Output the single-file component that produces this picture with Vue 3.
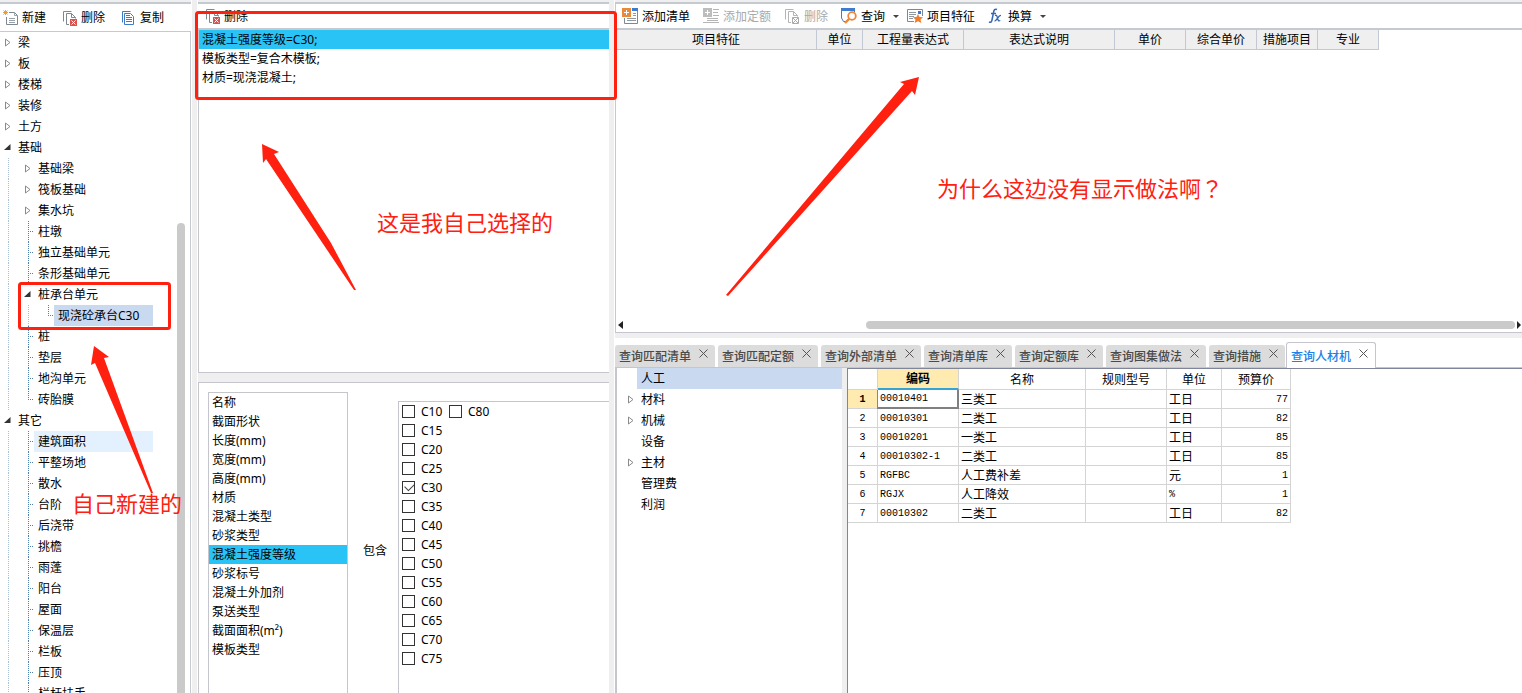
<script setup>
import { ref } from 'vue'

const leaf = (label, depth = 1, extra = {}) => ({ label, depth, mark: 'tee', ...extra })
const closed = (label, depth = 0) => ({ label, depth, mark: 'closed' })
const open = (label, depth = 0) => ({ label, depth, mark: 'open' })

const tree = [
  closed('梁'), closed('板'), closed('楼梯'), closed('装修'), closed('土方'),
  open('基础'),
  closed('基础梁', 1), closed('筏板基础', 1), closed('集水坑', 1),
  leaf('柱墩'), leaf('独立基础单元'), leaf('条形基础单元'),
  open('桩承台单元', 1),
  leaf('现浇砼承台C30', 2, { mark: 'end', state: 'selected' }),
  leaf('桩'), leaf('垫层'), leaf('地沟单元'), leaf('砖胎膜', 1, { mark: 'end' }),
  open('其它'),
  leaf('建筑面积', 1, { state: 'hover' }), leaf('平整场地'), leaf('散水'), leaf('台阶'),
  leaf('后浇带'), leaf('挑檐'), leaf('雨蓬'), leaf('阳台'), leaf('屋面'), leaf('保温层'),
  leaf('栏板'), leaf('压顶'), leaf('栏杆扶手'),
]

const rules = ['混凝土强度等级=C30;', '模板类型=复合木模板;', '材质=现浇混凝土;']

const attributes = [
  '名称', '截面形状', '长度(mm)', '宽度(mm)', '高度(mm)', '材质', '混凝土类型', '砂浆类型',
  '混凝土强度等级', '砂浆标号', '混凝土外加剂', '泵送类型', '截面面积(m²)', '模板类型',
]
const activeAttribute = ref('混凝土强度等级')

const grades = ['C10', 'C15', 'C20', 'C25', 'C30', 'C35', 'C40', 'C45', 'C50', 'C55', 'C60', 'C65', 'C70', 'C75', 'C80']
const checked = ref(['C30'])

const headers = ['项目特征', '单位', '工程量表达式', '表达式说明', '单价', '综合单价', '措施项目', '专业']

const tabs = ['查询匹配清单', '查询匹配定额', '查询外部清单', '查询清单库', '查询定额库', '查询图集做法', '查询措施', '查询人材机']
const activeTab = ref('查询人材机')

const categories = [
  { label: '人工', selected: true }, { label: '材料', more: true }, { label: '机械', more: true },
  { label: '设备' }, { label: '主材', more: true }, { label: '管理费' }, { label: '利润' },
]

const resources = [
  ['00010401', '三类工', '', '工日', 77],
  ['00010301', '二类工', '', '工日', 82],
  ['00010201', '一类工', '', '工日', 85],
  ['00010302-1', '二类工', '', '工日', 85],
  ['RGFBC', '人工费补差', '', '元', 1],
  ['RGJX', '人工降效', '', '%', 1],
  ['00010302', '二类工', '', '工日', 82],
]
</script>

<template>
  <main class="app">
    <svg class="defs" aria-hidden="true">
      <symbol id="i-new" viewBox="0 0 16 16">
        <path d="M6 2.500h5.500l3 3v9h-11V7" fill="#fff" stroke="#7d8892" />
        <path d="M11.500 2.500v3h3M6 8.500h6M6 10.500h6M6 12.500h6" fill="none" stroke="#9aa3ab" />
        <path d="M2.500 0v5M0 2.500h5M.5.5l4 4M4.500.5l-4 4" stroke="#f0a030" />
      </symbol>
      <symbol id="i-delete" viewBox="0 0 16 16">
        <path d="M1.500 11.500v-10h8M7 14.500H4.500v-11h5l4 4v1M9.500 3.500v4h4" fill="none" stroke="#7d8892" />
        <path d="M8 9h7v7H8z" fill="#d9534f" />
        <path d="M9.500 10.500l4 4M13.500 10.500l-4 4" stroke="#fff" />
      </symbol>
      <symbol id="i-delete-off" viewBox="0 0 16 16">
        <path d="M1.500 11.500v-10h8M7 14.500H4.500v-11h5l4 4v1M9.500 3.500v4h4" fill="none" stroke="#b5b5b5" />
        <path d="M8.500 9.500h6v6h-6zM9 10l5 5M14 10l-5 5" fill="none" stroke="#aaa" />
      </symbol>
      <symbol id="i-copy" viewBox="0 0 16 16">
        <path d="M1.500 12.500v-11h8" fill="none" stroke="#3d7cc4" />
        <path d="M3.500 3.500h6l3 3v8h-9z" fill="#fff" stroke="#3d7cc4" />
        <path d="M5 7.500h6M5 9.500h6M5 11.500h6M5 5.500h4" stroke="#3d7cc4" />
      </symbol>
      <symbol id="i-add-list" viewBox="0 0 16 16">
        <path d="M10 1.500h5.500v14h-13V10" fill="#fff" stroke="#7d8892" />
        <path d="M10 0h6v3h-6z" fill="#3d7cd0" />
        <path d="M11 5.500h3M11 7.500h3M5 10.500h9M5 12.500h9" stroke="#8f989f" />
        <path d="M0 0h9v9H0z" fill="#e88a3a" />
        <path d="M4.500 2v5M2 4.500h5" stroke="#fff" />
      </symbol>
      <symbol id="i-add-quota" viewBox="0 0 16 16">
        <path d="M10 1.500h6M10 4.500h5M10 7.500h6M4 10.500h11M0 14.500h16M4 12.500h11" stroke="#b5b5b5" />
        <path d="M0 0h9v9H0z" fill="#bdbdbd" />
        <path d="M4.500 2v5M2 4.500h5" stroke="#fff" />
      </symbol>
      <symbol id="i-query" viewBox="0 0 16 16">
        <path d="M4 13.500H2.500L.5 10V1h13v3" fill="#fff" stroke="#3d7cd0" />
        <path d="M0 0h14v3H0z" fill="#3d7cd0" />
        <circle cx="11" cy="8" r="3.800" fill="#fff" stroke="#ee8435" stroke-width="1.800" />
        <path d="M8 11l-4 4" stroke="#ee8435" stroke-width="2.400" />
      </symbol>
      <symbol id="i-feature" viewBox="0 0 16 16">
        <path d="M7 13.500H.5v-12h15V8" fill="#fff" stroke="#7d8892" />
        <path d="M2 4.500h7M2 6.500h7M2 8.500h5M2 10.500h4" stroke="#8f989f" />
        <path d="M11 3h3v3h-3z" fill="#3d7cd0" />
        <path d="M11 6l1.500 3 3.500.3-2.500 2.300.8 3.400-3.300-1.800L7.700 15l.8-3.400L6 9.300 9.500 9z" fill="#ee7d2e" />
      </symbol>
      <symbol id="i-fx" viewBox="0 0 16 16">
        <path d="M9 1.500C6.800.6 6 2 5.600 4L4 12c-.4 2-1.300 2.700-3 2M3 5.500h5" fill="none" stroke="#3568b0" stroke-width="1.500" />
        <path d="M7 7.500c1.500-.8 2 .2 2.500 2.500s1 3.500 2.800 2.500M13 7.300c-1.500-.2-2.300 1-3.500 3S7.800 13.200 6.500 12.800" fill="none" stroke="#3568b0" stroke-width="1.300" />
      </symbol>
      <symbol id="i-closed" viewBox="0 0 8 9">
        <path d="M1.500 1v7L6 4.500z" fill="#fff" stroke="#8a8a8a" />
      </symbol>
      <symbol id="i-open" viewBox="0 0 8 9">
        <path d="M6.500 1v6H0z" fill="#333" />
      </symbol>
    </svg>

    <aside class="pane side">
      <div class="toolbar">
        <button class="tool"><svg class="icon"><use href="#i-new" /></svg>新建</button>
        <button class="tool"><svg class="icon"><use href="#i-delete" /></svg>删除</button>
        <button class="tool"><svg class="icon"><use href="#i-copy" /></svg>复制</button>
      </div>
      <div class="tree-area">
        <ul class="tree">
          <li v-for="node in tree" :key="node.label" class="node">
            <span v-for="level in node.depth" :key="level" class="guide"></span>
            <span class="toggle" :class="node.mark">
              <svg v-if="node.mark === 'closed' || node.mark === 'open'" class="arrow"><use :href="'#i-' + node.mark" /></svg>
            </span>
            <span class="node-label" :class="node.state">{{ node.label }}</span>
          </li>
        </ul>
        <div class="v-thumb"></div>
      </div>
    </aside>

    <div class="splitter side-splitter"></div>

    <section class="middle">
      <div class="pane rules">
        <div class="toolbar">
          <button class="tool"><svg class="icon"><use href="#i-delete" /></svg>删除</button>
        </div>
        <ul class="list framed">
          <li v-for="(rule, i) in rules" :key="rule" :class="{ picked: i === 0 }">{{ rule }}</li>
        </ul>
      </div>
      <div class="divider"></div>
      <div class="filter">
        <ul class="list attributes">
          <li v-for="name in attributes" :key="name" :class="{ picked: name === activeAttribute }" @click="activeAttribute = name">{{ name }}</li>
        </ul>
        <div class="operator">包含</div>
        <div class="grades">
          <label v-for="grade in grades" :key="grade" class="grade">
            <input v-model="checked" type="checkbox" :value="grade" />{{ grade }}
          </label>
        </div>
      </div>
    </section>

    <div class="splitter main-splitter"></div>

    <section class="right">
      <div class="pane works">
        <div class="toolbar wide">
          <button class="tool"><svg class="icon"><use href="#i-add-list" /></svg>添加清单</button>
          <button class="tool" disabled><svg class="icon"><use href="#i-add-quota" /></svg>添加定额</button>
          <button class="tool" disabled><svg class="icon"><use href="#i-delete-off" /></svg>删除</button>
          <button class="tool drop"><svg class="icon"><use href="#i-query" /></svg>查询</button>
          <button class="tool"><svg class="icon"><use href="#i-feature" /></svg>项目特征</button>
          <button class="tool drop"><svg class="icon"><use href="#i-fx" /></svg>换算</button>
        </div>
        <div class="works-body">
          <table class="works-table">
            <thead>
              <tr><th v-for="(head, i) in headers" :key="head" :class="'w' + i">{{ head }}</th></tr>
            </thead>
          </table>
        </div>
        <div class="h-scroll">
          <button class="scroll-left" aria-label="向左"></button>
          <div class="h-track"><div class="h-thumb"></div></div>
          <button class="scroll-right" aria-label="向右"></button>
        </div>
      </div>
      <div class="divider"></div>
      <div class="query">
        <nav class="tabs">
          <div v-for="tab in tabs" :key="tab" class="tab" :class="{ active: tab === activeTab }">
            <button class="tab-name" @click="activeTab = tab">{{ tab }}</button>
            <button class="tab-close" aria-label="关闭">
              <svg viewBox="0 0 9 9"><path d="M.5.5l8 8M8.500.5l-8 8" stroke="#555" /></svg>
            </button>
          </div>
        </nav>
        <div class="query-body">
          <ul class="categories">
            <li v-for="item in categories" :key="item.label" class="node">
              <span class="cat-toggle"><svg v-if="item.more" class="arrow"><use href="#i-closed" /></svg></span>
              <span class="cat-label" :class="{ selected: item.selected }">{{ item.label }}</span>
            </li>
          </ul>
          <div class="splitter thin"></div>
          <div class="grid-area">
            <table class="grid">
              <thead>
                <tr>
                  <th class="c-num"></th><th class="c-code current">编码</th><th class="c-name">名称</th>
                  <th class="c-spec">规则型号</th><th class="c-unit">单位</th><th class="c-price">预算价</th>
                </tr>
              </thead>
              <tbody>
                <tr v-for="(row, i) in resources" :key="row[0]">
                  <th :class="{ current: i === 0 }">{{ i + 1 }}</th>
                  <td class="latin" :class="{ focus: i === 0 }">{{ row[0] }}</td>
                  <td>{{ row[1] }}</td>
                  <td>{{ row[2] }}</td>
                  <td :class="{ latin: row[3] === '%' }">{{ row[3] }}</td>
                  <td class="latin price">{{ row[4] }}</td>
                </tr>
              </tbody>
            </table>
          </div>
        </div>
      </div>
    </section>

    <svg class="marks" width="1522" height="693" aria-hidden="true">
      <rect x="196.500" y="12.500" width="419" height="86" rx="2" />
      <rect x="19.500" y="283.500" width="150" height="45" rx="2" />
      <polygon points="94,346 109,357 104,358 153,493 151,493 95,363 91,365" />
      <polygon points="262,144 279,152 274,154 331,243 356,290 354,290 266,159 263,163" />
      <polygon points="919,77 915,95 912,91 728,296 726,295 904,84 900,82" />
    </svg>
    <p class="note note-new">自己新建的</p>
    <p class="note note-chosen">这是我自己选择的</p>
    <p class="note note-why">为什么这边没有显示做法啊？</p>
  </main>
</template>

<style>
html, body { overflow: hidden; }
</style>

<style scoped>
.app {
  position: relative;
  display: grid;
  grid-template-columns: 191px 7px 411px 6px minmax(0, 1fr);
  height: 100vh;
  overflow: hidden;
  background: #fff;
  color: #000;
  font: 12px/19px "Noto Sans", "Noto Sans CJK SC", sans-serif;
}
.app * { box-sizing: border-box; }
.defs { position: absolute; width: 0; height: 0; }
ul { list-style: none; margin: 0; padding: 0; }
p { margin: 0; }
button {
  margin: 0;
  padding: 0;
  border: 0;
  background: none;
  color: inherit;
  font: inherit;
}

.pane {
  display: flex;
  flex-direction: column;
  min-height: 0;
  border-top: 2px solid #efefef;
}
.toolbar {
  display: flex;
  flex: none;
  align-items: center;
  height: 28px;
  padding-left: 3px;
  border-top: 2px solid #c5c9d0;
  border-bottom: 2px solid #c5c9d0;
  white-space: nowrap;
}
.side .toolbar { height: 30px; border-bottom-width: 1px; gap: 16px; }
.rules .toolbar { padding-left: 7px; }
.toolbar.wide { border-left: 1px solid #c5c9d0; padding-left: 0; }
.tool { display: flex; align-items: center; gap: 3px; height: 22px; }
.icon { width: 16px; height: 16px; flex: none; }
.wide .tool { gap: 4px; padding: 0 7px 0 6px; }
.tool:disabled { color: #a9a9a9; }
.wide .drop { padding-right: 2px; }
.drop::after {
  content: "";
  margin-left: 4px;
  border: 3px solid transparent;
  border-top-color: #444;
  border-bottom: 0;
}

.tree-area {
  display: flex;
  flex: 1;
  min-height: 0;
  overflow: hidden;
  border-right: 1px solid #c5c9d0;
}
.tree { flex: 1; }
.node { display: flex; height: 21px; line-height: 21px; white-space: nowrap; }
.guide, .toggle { flex: none; background-repeat: no-repeat; }
.guide {
  width: 20px;
  background-image: repeating-linear-gradient(#a9c0d6 0 1px, transparent 1px 2px);
  background-size: 1px 100%;
  background-position: 8px 0;
}
.toggle { display: flex; align-items: center; width: 14px; padding-left: 4px; }
.toggle.tee, .toggle.end {
  background-image:
    repeating-linear-gradient(#4f7fae 0 1px, transparent 1px 2px),
    repeating-linear-gradient(90deg, #4f7fae 0 1px, transparent 1px 2px);
  background-size: 1px 100%, 5px 1px;
  background-position: 8px 0, 8px 10px;
}
.toggle.end { background-size: 1px 11px, 5px 1px; }
.arrow { width: 8px; height: 9px; flex: none; }
.node-label { flex: 1; padding-left: 4px; margin-right: 24px; }
.node-label.selected, .cat-label.selected { background: #c9d9ef; }
.node-label.hover { background: #e3f0fe; }
.v-thumb {
  width: 8px;
  margin: 191px 5px 0 0;
  border-radius: 4px 4px 0 0;
  background: #cacaca;
}

.splitter { background: #efefef; }
.side-splitter { border: solid #fff; border-width: 0 1px; }
.main-splitter { border-right: 1px solid #fff; }

.middle {
  display: grid;
  grid-template-rows: minmax(0, 373fr) 9px minmax(0, 311fr);
  min-height: 0;
}
.divider { background: #efefef; }
.list li { height: 19px; white-space: nowrap; cursor: default; }
.picked { background: #2ac3f5; }
.framed {
  flex: 1;
  border: solid #c5c5cd;
  border-width: 0 0 1px 1px;
}
.framed li { padding-left: 3px; }
.filter {
  display: flex;
  min-height: 0;
  padding: 9px 0 0 9px;
  border: solid #c5c5cd;
  border-width: 1px 0 0 1px;
}
.attributes { width: 140px; border: 1px solid #c5c5cd; border-bottom: 0; }
.attributes li { padding-left: 3px; }
.operator { flex: none; width: 50px; align-self: center; padding: 16px 0 0 15px; }
.grades {
  flex: 1;
  display: grid;
  grid-template-rows: repeat(14, 19px);
  grid-auto-flow: column;
  grid-auto-columns: 47px;
  margin-top: 9px;
  padding-left: 3px;
  border: solid #c5c5cd;
  border-width: 1px 0 0 1px;
}
.grade { display: flex; align-items: center; gap: 6px; }
.grade input {
  appearance: none;
  position: relative;
  flex: none;
  width: 13px;
  height: 13px;
  margin: 0;
  border: 1px solid #333;
  background: #fff;
}
.grade input:checked::after {
  content: "";
  position: absolute;
  left: 2px;
  top: 1px;
  width: 8px;
  height: 5px;
  border: solid #444;
  border-width: 0 0 1px 1px;
  transform: rotate(-45deg);
}

.right {
  display: grid;
  grid-template-rows: minmax(0, 333fr) 5px minmax(0, 355fr);
  min-width: 0;
  min-height: 0;
}
.works { border-bottom: 1px solid #c5c5cd; }
.works-body { flex: 1; border-left: 1px solid #c5c9d0; }
.works-table { border-collapse: separate; border-spacing: 0; table-layout: fixed; width: 763px; }
.works-table th {
  height: 20px;
  padding: 0;
  border: solid #c2c8d4;
  border-width: 0 1px 1px 0;
  background: #efefef;
  font-weight: 400;
}
.w0 { width: 201px; }
.w1 { width: 46px; }
.w2 { width: 101px; }
.w3 { width: 151px; }
.w4, .w5 { width: 71px; }
.w6, .w7 { width: 61px; }
.h-scroll {
  display: flex;
  align-items: center;
  height: 15px;
  padding: 0 1px 0 2px;
  border-left: 1px solid #c5c9d0;
}
.scroll-left, .scroll-right { border: 4px solid transparent; }
.scroll-left { border-left: 0; border-right: 5px solid #222; }
.scroll-right { border-right: 0; border-left: 4px solid #222; }
.h-track { flex: 1; margin: 0 2px 0 3px; }
.h-thumb { width: 73%; height: 8px; margin-left: auto; border-radius: 4px; background: #cacaca; }

.query { display: flex; flex-direction: column; min-height: 0; }
.tabs {
  display: flex;
  align-items: flex-end;
  flex: none;
  gap: 3px;
  height: 30px;
  border-bottom: 1px solid #c5c5cd;
}
.tab {
  display: flex;
  gap: 8px;
  height: 22px;
  padding: 0 7px 0 4px;
  border-radius: 3px 3px 0 0;
  background: #dcdcdc;
  color: #4a4a4a;
  font-weight: 500;
  white-space: nowrap;
}
.tab.active {
  height: 26px;
  margin: 0 0 -1px -2px;
  padding: 2px 7px 0 4px;
  border: 1px solid #c5c5cd;
  border-bottom: 0;
  background: #fff;
  color: #2080e8;
}
.tab-name { height: 22px; line-height: 24px; }
.tab-close { display: flex; width: 9px; height: 9px; margin-top: 4px; }
.tab-close svg { width: 9px; height: 9px; }
.query-body { display: flex; flex: 1; min-height: 0; border-left: 2px solid #c5c5cd; }
.categories { flex: none; width: 225px; }
.cat-toggle { display: flex; flex: none; align-items: center; width: 20px; padding-left: 10px; }
.cat-label { flex: 1; padding-left: 4px; }
.thin { flex: none; width: 5px; }
.grid-area { flex: 1; min-width: 0; border: solid #80869a; border-width: 1px 0 0 1px; }
.grid { border-collapse: separate; border-spacing: 0; table-layout: fixed; width: 443px; }
.grid th, .grid td {
  height: 19px;
  padding: 0 2px;
  border: solid #d4d4d4;
  border-width: 0 1px 1px 0;
  line-height: 17px;
  text-align: left;
}
.grid thead th { height: 21px; }
.grid th { text-align: center; font-weight: 400; }
.grid tbody th, .grid .latin { font-family: "Liberation Mono", monospace; font-size: 10px; }
.grid .current { background: #ffebb0; font-weight: 700; }
.grid thead .current { border-bottom: 2px solid #35a3d3; }
.grid .focus { border-right: 2px solid #808080; border-bottom: 2px solid #808080; box-shadow: -1px 0 #35a3d3; }
.grid .price { text-align: right; }
.c-num { width: 30px; }
.c-code, .c-spec { width: 81px; }
.c-name { width: 127px; }
.c-unit { width: 55px; }
.c-price { width: 69px; }

.marks { position: absolute; left: 0; top: 0; pointer-events: none; }
.marks rect { fill: none; stroke: #ff2010; stroke-width: 3; }
.marks polygon { fill: #ff2010; }
.note {
  position: absolute;
  color: #ff2010;
  font-family: "Noto Sans CJK SC", sans-serif;
  font-size: 22px;
  line-height: 30px;
  white-space: nowrap;
  pointer-events: none;
}
.note-new { left: 72px; top: 487px; }
.note-chosen { left: 377px; top: 206px; }
.note-why { left: 937px; top: 172px; font-family: "Noto Sans CJK TC", "Noto Sans CJK SC", sans-serif; }
</style>
